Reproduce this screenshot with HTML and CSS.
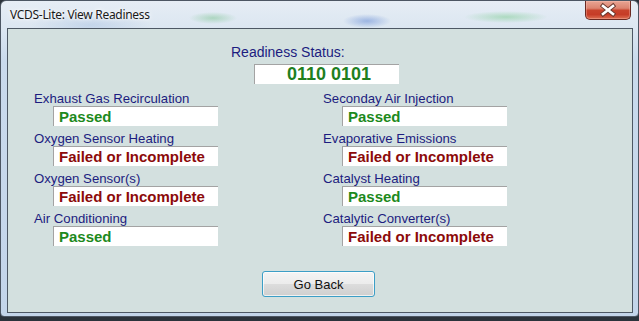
FILE: index.html
```html
<!DOCTYPE html>
<html>
<head>
<meta charset="utf-8">
<link rel="stylesheet" href="styles.css">
</head>
<body>
<div class="window">
  <div class="titlebar">
    <span class="title">VCDS-Lite: View Readiness</span>
    <div class="close">
      <svg width="46" height="18" viewBox="0 0 46 18">
        <path d="M18 5 L28 13 M28 5 L18 13" stroke="#6b3a30" stroke-width="4.5" stroke-linecap="square" fill="none"/>
        <path d="M18 5 L28 13 M28 5 L18 13" stroke="#ffffff" stroke-width="2.6" stroke-linecap="square" fill="none"/>
      </svg>
    </div>
  </div>
  <div class="client">
    <div class="status">
      <div class="status-label">Readiness Status:</div>
      <div class="status-box">0110 0101</div>
    </div>
    <div class="grid">
      <div class="item"><div class="label">Exhaust Gas Recirculation</div><div class="box pass">Passed</div></div>
      <div class="item"><div class="label">Seconday Air Injection</div><div class="box pass">Passed</div></div>
      <div class="item"><div class="label">Oxygen Sensor Heating</div><div class="box fail">Failed or Incomplete</div></div>
      <div class="item"><div class="label">Evaporative Emissions</div><div class="box fail">Failed or Incomplete</div></div>
      <div class="item"><div class="label">Oxygen Sensor(s)</div><div class="box fail">Failed or Incomplete</div></div>
      <div class="item"><div class="label">Catalyst Heating</div><div class="box pass">Passed</div></div>
      <div class="item"><div class="label">Air Conditioning</div><div class="box pass">Passed</div></div>
      <div class="item"><div class="label">Catalytic Converter(s)</div><div class="box fail">Failed or Incomplete</div></div>
    </div>
    <div class="actions"><button class="btn">Go Back</button></div>
  </div>
</div>
</body>
</html>
```
FILE: styles.css
```css
html, body {
  margin: 0;
  padding: 0;
}
body {
  width: 639px;
  height: 321px;
  overflow: hidden;
  background: #2b333b;
  font-family: "Liberation Sans", Arial, sans-serif;
}
.window {
  box-sizing: border-box;
  width: 639px;
  height: 317px;
  border: 1px solid #4c5663;
  border-radius: 6px 6px 4px 4px;
  padding: 0 5px 3px 6px;
  display: flex;
  flex-direction: column;
  background:
    radial-gradient(ellipse 24px 6px at 212px 17px, rgba(110, 190, 130, 0.45), rgba(110, 190, 130, 0) 100%),
    radial-gradient(ellipse 24px 7px at 366px 20px, rgba(90, 130, 210, 0.5), rgba(90, 130, 210, 0) 100%),
    radial-gradient(ellipse 42px 6px at 505px 16px, rgba(110, 200, 130, 0.45), rgba(110, 200, 130, 0) 100%),
    radial-gradient(ellipse 60px 14px at 90px 24px, rgba(150, 180, 220, 0.35), rgba(150, 180, 220, 0) 100%),
    linear-gradient(to bottom, #e6edf5 0px, #dbe6f1 28px, #c9daec 60px, #c3d5ea 100%);
}
.titlebar {
  height: 27px;
  display: flex;
  align-items: flex-start;
  padding-left: 3px;
}
.title {
  font-family: "Noto Sans", "Open Sans", sans-serif;
  font-size: 12px;
  line-height: 16px;
  margin-top: 6px;
  color: #1a1a1a;
  letter-spacing: -0.3px;
  text-shadow: 0 0 6px #ffffff, 0 0 3px #ffffff;
}
.close {
  margin-left: auto;
  margin-right: 2px;
  width: 44px;
  height: 18px;
  border: 1px solid #6a2a22;
  border-top: none;
  border-radius: 0 0 5px 5px;
  background: linear-gradient(to bottom, #e8a493 0%, #dc8470 40%, #c8432c 52%, #c63c27 75%, #dd6f52 100%);
  box-shadow: inset 0 0 0 1px rgba(255, 200, 190, 0.35);
  overflow: hidden;
  display: flex;
  justify-content: center;
}
.close svg {
  flex: none;
}
.client {
  box-sizing: border-box;
  height: 285px;
  border: 1px solid #4d5864;
  background: #d3e0df;
  padding-top: 15px;
  color: #1c1c80;
}
.status-label {
  margin-left: 223px;
  font-size: 14px;
  line-height: 16px;
}
.status-box {
  box-sizing: border-box;
  margin-top: 4px;
  margin-left: 246px;
  width: 145px;
  height: 20px;
  background: #ffffff;
  border-top: 1px solid #a3a3a3;
  border-left: 1px solid #a3a3a3;
  text-align: center;
  font-size: 18px;
  font-weight: bold;
  line-height: 19px;
  color: #1f7f1f;
  padding-left: 4px;
}
.grid {
  margin-top: 6px;
  padding-left: 26px;
  display: grid;
  grid-template-columns: 289px 289px;
  row-gap: 4px;
}
.label {
  font-size: 13.2px;
  line-height: 15px;
  padding-top: 1px;
}
.box {
  box-sizing: border-box;
  margin-left: 19px;
  width: 165px;
  height: 20px;
  background: #ffffff;
  border-top: 1px solid #a3a3a3;
  border-left: 1px solid #a3a3a3;
  padding-left: 5px;
  font-size: 15px;
  font-weight: bold;
  line-height: 19px;
}
.pass {
  color: #1d8a1d;
}
.fail {
  color: #8c0a0a;
}
.actions {
  margin-top: 25px;
  padding-left: 254px;
}
.btn {
  box-sizing: border-box;
  width: 113px;
  height: 26px;
  border: 1px solid #3c9ec6;
  border-radius: 3px;
  background: linear-gradient(to bottom, #f4f4f4 0%, #ececec 48%, #dcdcdc 52%, #cfcfcf 100%);
  box-shadow: inset 0 0 0 1px rgba(255, 255, 255, 0.7);
  font-family: "Liberation Sans", Arial, sans-serif;
  font-size: 13px;
  color: #111111;
  padding: 0;
  margin: 0;
}
```
